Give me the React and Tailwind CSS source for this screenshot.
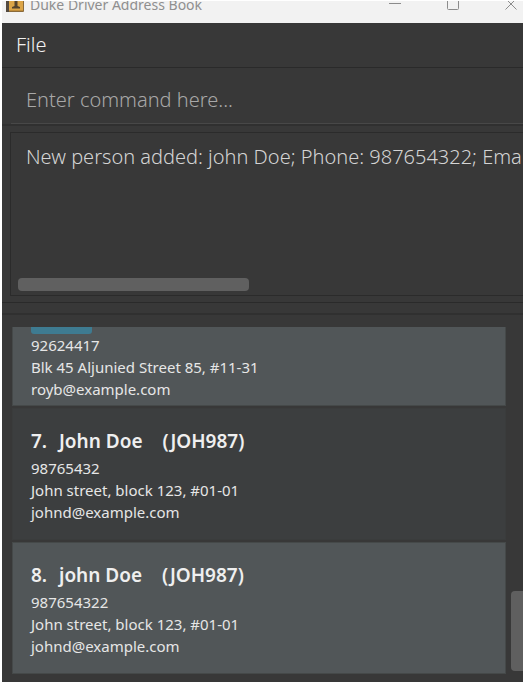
const people = [
  {
    tag: true,
    phone: "92624417",
    address: "Blk 45 Aljunied Street 85, #11-31",
    email: "royb@example.com",
    look: "border-t-0 border-[#454949] pb-[5px] bg-[#515658]",
  },
  {
    index: "7.",
    name: "John Doe",
    code: "(JOH987)",
    phone: "98765432",
    address: "John street, block 123, #01-01",
    email: "johnd@example.com",
    look: "border-[#3a3c3c] pb-4 bg-[#3c3e3f]",
  },
  {
    index: "8.",
    name: "john Doe",
    code: "(JOH987)",
    phone: "987654322",
    address: "John street, block 123, #01-01",
    email: "johnd@example.com",
    look: "border-[#454949] pb-4 bg-[#515658]",
  },
];

function AppIcon() {
  return (
    <svg className="h-5 w-[18px] shrink-0" viewBox="0 0 18 20" aria-hidden="true">
      <rect x="0" y="0" width="18" height="19" rx="1" fill="#8a6a3a" />
      <rect x="0" y="0" width="3" height="19" fill="#544a40" />
      <rect x="3" y="0" width="14" height="18" fill="#dca547" />
      <rect x="3" y="17" width="14" height="1" fill="#c08d3a" />
      <path d="M8.5 6h3v7l2.5 1v1.5H6v-1.5l2.5-1z" fill="#54432d" />
    </svg>
  );
}

function TitleBar() {
  return (
    <header className="flex h-[22px] items-end overflow-hidden bg-[#f2f2f2] pb-[10px] pl-1 text-[#8f8f8f]">
      <AppIcon />
      <h1 className="ml-[6px] grow whitespace-nowrap text-[14px] leading-[16px]">Duke Driver Address Book</h1>
      <div className="flex shrink-0 items-end gap-[46px] pr-[6px]">
        <button type="button" aria-label="Minimize" className="h-4 w-3">
          <svg className="h-4 w-3" viewBox="0 0 12 16" fill="none" stroke="#8c8c8c">
            <path d="M0 6.5h12" />
          </svg>
        </button>
        <button type="button" aria-label="Maximize" className="h-4 w-3">
          <svg className="h-4 w-3" viewBox="0 0 12 16" fill="none" stroke="#8c8c8c">
            <rect x="0.5" y="1.5" width="11" height="11" rx="1" />
          </svg>
        </button>
        <button type="button" aria-label="Close" className="h-4 w-3">
          <svg className="h-4 w-3" viewBox="0 0 12 16" fill="none" stroke="#8c8c8c">
            <path d="M0.5 1.5l11 11M11.5 1.5l-11 11" />
          </svg>
        </button>
      </div>
    </header>
  );
}

function PersonCard({ person }) {
  return (
    <li className={`border px-[18px] text-[15px] leading-[22px] text-[#e6e6e6] ${person.look}`}>
      {person.tag && <div className="h-[7px] w-[61px] rounded-b-[3px] bg-[#3e7b91]" />}
      {person.name && (
        <h2 className="flex pb-[2px] pt-[18px] text-[19px] font-semibold leading-[28px] text-[#efefef]">
          <span className="w-7">{person.index}</span>
          <span className="mr-5">{person.name}</span>
          <span>{person.code}</span>
        </h2>
      )}
      <p>{person.phone}</p>
      <p>{person.address}</p>
      <p>{person.email}</p>
    </li>
  );
}

export default function App() {
  return (
    <div className="bg-white pl-[2px] pt-px font-['Noto_Sans','Open_Sans',sans-serif]">
      <TitleBar />
      <div className="flex min-h-[calc(100vh-23px)] flex-col bg-[#383838]">
        <nav className="flex h-[45px] items-center border-b border-[#2a2a2a] px-[14px]">
          <button type="button" className="text-[20px] font-light leading-[28px] text-[#f0f0f0]">
            File
          </button>
        </nav>
        <div className="border-b-2 border-[#303030] pl-[9px]">
          <input
            type="text"
            aria-label="Command"
            placeholder="Enter command here..."
            className="block h-14 w-full border-b border-[#484848] bg-transparent px-[15px] pt-2 text-[20px] font-light text-white outline-none placeholder:text-[#a8a8a8]"
          />
        </div>
        <section className="border-b border-[#2a2a2a] pb-[6px] pl-2 pt-[6px]">
          <div className="flex h-[164px] flex-col justify-between overflow-hidden border-y border-l border-[#2b2b2b] pb-[4px] pl-[7px] pt-[9px]">
            <p className="whitespace-nowrap pl-2 text-[20px] font-light leading-[30px] text-[#d4d4d4]">
              New person added: john Doe; Phone: 987654322; Ema
            </p>
            <div className="h-[13px] w-[231px] rounded-[4px] bg-[#606060]" />
          </div>
        </section>
        <div className="h-3 border-b-2 border-[#303030]" />
        <main className="mb-2 mt-3 flex pl-[10px]">
          <ul className="flex min-w-0 grow flex-col gap-[2px]">
            {people.map((person) => (
              <PersonCard key={person.phone} person={person} />
            ))}
          </ul>
          <div className="flex w-[17px] flex-col justify-end pb-[3px] pl-[5px]">
            <div className="h-20 rounded-l-[4px] bg-[#5f5f5f]" />
          </div>
        </main>
      </div>
    </div>
  );
}
